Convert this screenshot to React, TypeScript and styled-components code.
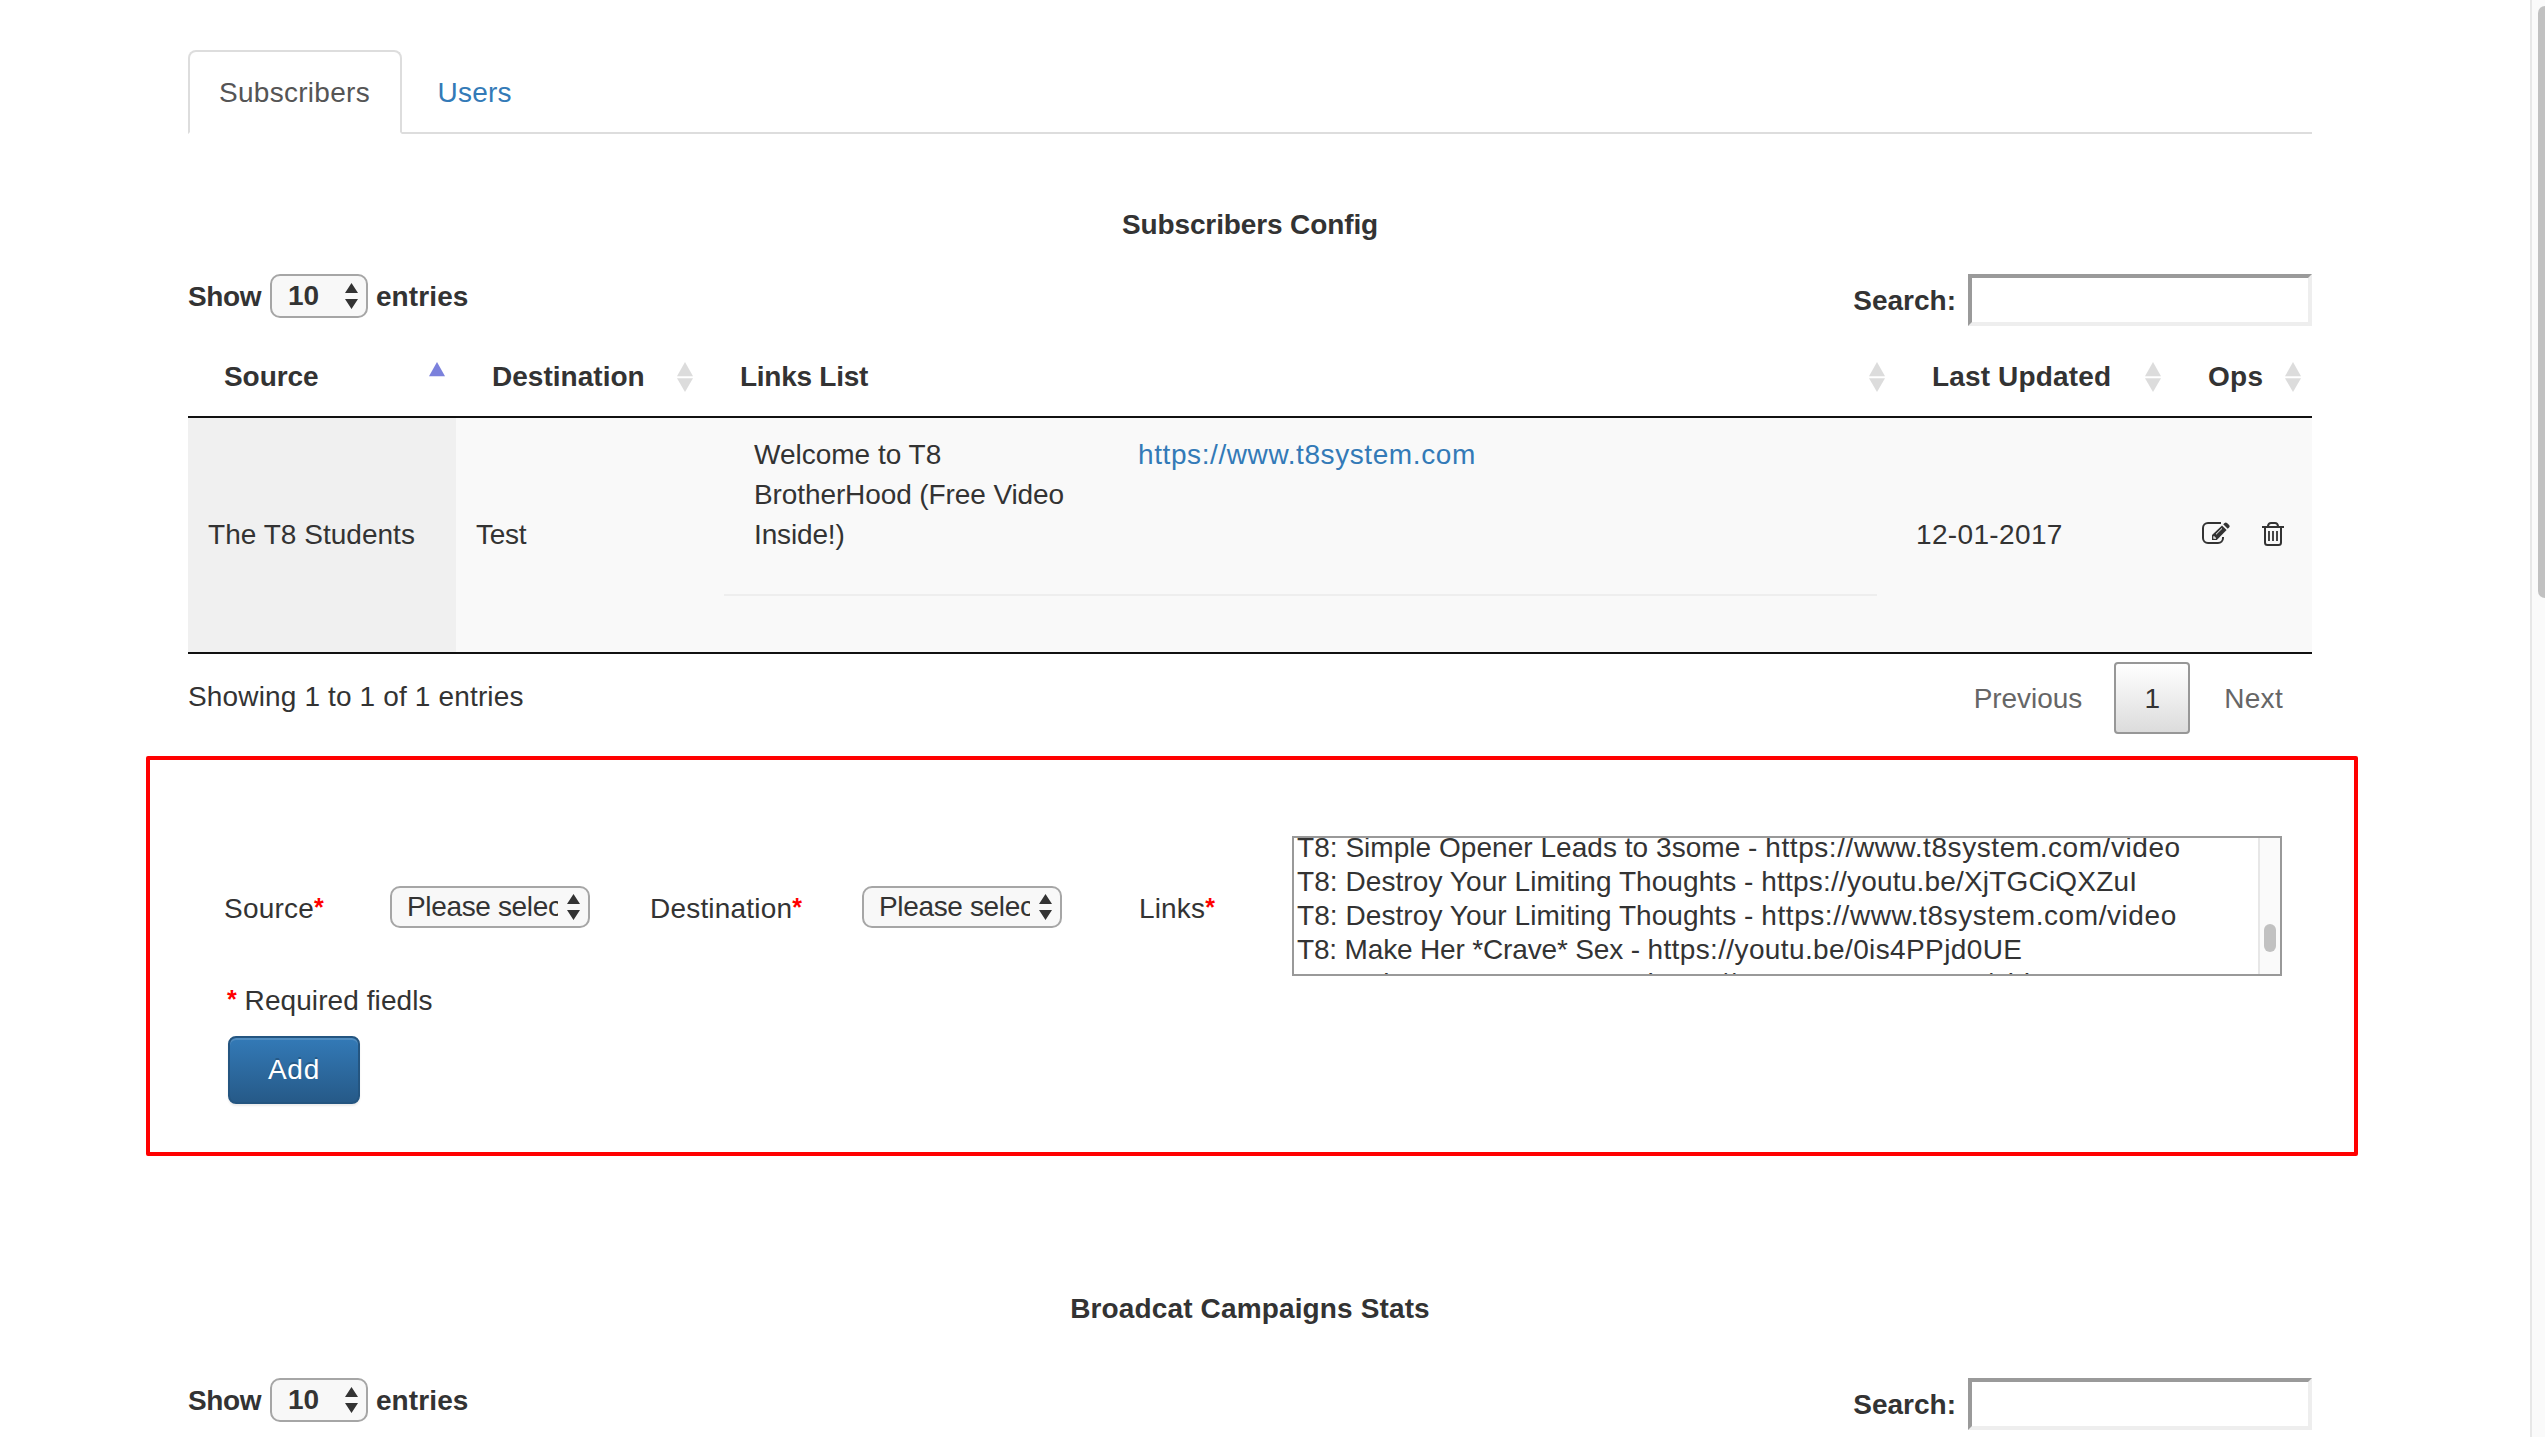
import React from 'react';
import styled, { createGlobalStyle, css } from 'styled-components';

const GlobalStyle = createGlobalStyle`
  *, *::before, *::after { box-sizing: border-box; }
  body {
    margin: 0;
    overflow: hidden;
    background: #fff;
    color: #333;
    font: 28px/40px "Liberation Sans", Arial, sans-serif;
  }
`;

const Page = styled.div`
  display: flex;
  height: 1437px;
  overflow: hidden;
`;

const Main = styled.main`
  flex: 1;
  padding: 50px 0 0 188px;
`;

const Content = styled.div`
  width: 2124px;
`;

/* Text run with tracking */
const T = styled.span<{ $ls?: number }>`
  letter-spacing: ${(p) => p.$ls ?? 0}px;
  white-space: pre;
`;

/* Page scrollbar */
const ScrollTrack = styled.div`
  width: 15px;
  padding: 6px 0 0 6px;
  overflow: hidden;
  background: #fafafa;
  border-left: 2px solid #e7e7e7;
`;

const ScrollThumb = styled.div`
  width: 14px;
  height: 592px;
  border-radius: 7px;
  background: #c1c1c1;
`;

/* Tabs */
const Tabs = styled.nav`
  display: flex;
  gap: 5px;
  height: 84px;
  border-bottom: 2px solid #ddd;
`;

const Tab = styled.a<{ $active?: boolean }>`
  height: 84px;
  padding: 21px 29px 0;
  border: 2px solid transparent;
  border-radius: 8px 8px 0 0;
  color: #337ab7;
  ${(p) =>
    p.$active &&
    css`
      width: 213.5px;
      color: #555;
      background: #fff;
      border-color: #ddd #ddd #fff;
    `}
`;

const Heading = styled.h5<{ $top: number }>`
  margin: ${(p) => p.$top}px 0 0;
  font-size: 28px;
  line-height: 40px;
  font-weight: 700;
  text-align: center;
`;

/* Length menu and search */
const Controls = styled.div<{ $top: number }>`
  display: flex;
  justify-content: space-between;
  align-items: flex-start;
  height: 52px;
  margin-top: ${(p) => p.$top}px;
  font-weight: 700;
`;

const LengthMenu = styled.label`
  display: flex;
  align-items: center;
  & > span {
    padding-top: 2px;
  }
`;

const ShowText = styled(T)`
  width: 82px;
`;

const SearchLabel = styled.label`
  display: flex;
  align-items: center;
  gap: 12px;
  & > span {
    padding-top: 2px;
  }
`;

const SearchBox = styled.input`
  width: 344px;
  height: 52px;
  border: 4px solid;
  border-color: #9a9a9a #eee #eee #9a9a9a;
  background: #fff;
  outline: none;
`;

const SelectBox = styled.div<{ $w: number; $h: number; $pad: number }>`
  display: flex;
  align-items: center;
  flex: none;
  width: ${(p) => p.$w}px;
  height: ${(p) => p.$h}px;
  padding: 0 8px 0 ${(p) => p.$pad}px;
  border: 2px solid #a6a6a6;
  border-radius: 10px;
  background: #f8f8f8;
`;

const SelectText = styled.div`
  flex: 1;
  height: 40px;
  overflow: hidden;
  white-space: nowrap;
`;

const ArrowsSvg = styled.svg`
  flex: none;
  width: 13px;
  height: 26px;
  margin-left: 9px;
  fill: #333;
`;

const SelectArrows = () => (
  <ArrowsSvg viewBox="0 0 13 26">
    <path d="M6.5 0 13 10H0zM0 16h13L6.5 26z" />
  </ArrowsSvg>
);

/* Data table */
const COLUMNS = '268px 248px 1192px 276px 140px';

const HeadRow = styled.div`
  display: grid;
  grid-template-columns: ${COLUMNS};
  height: 82px;
  margin-top: 10px;
  border-bottom: 2px solid #111;
  font-weight: 700;
`;

const HeadCell = styled.div`
  display: flex;
  align-items: center;
  justify-content: space-between;
  padding: 2px 11px 0 36px;
`;

const SortSvg = styled.svg`
  flex: none;
  width: 16px;
  height: 30px;
`;

const SortIcon = ({ asc }: { asc?: boolean }) => (
  <SortSvg viewBox="0 0 16 30">
    <path d="M8 0 16 14.2H0z" fill={asc ? '#7b81dc' : '#dcdcdc'} />
    {!asc && <path d="M0 16.2h16L8 30z" fill="#dcdcdc" />}
  </SortSvg>
);

const BodyRow = styled.div`
  display: grid;
  grid-template-columns: ${COLUMNS};
  height: 236px;
  border-bottom: 2px solid #111;
  background: #f9f9f9;
`;

const Cell = styled.div<{ $sorted?: boolean }>`
  display: flex;
  align-items: center;
  padding: 0 19px 0 20px;
  ${(p) => p.$sorted && 'background: #f0f0f0;'}
`;

const LinksCell = styled.div`
  padding: 17px 19px 0 20px;
`;

const LinkRow = styled.div`
  display: grid;
  grid-template-columns: 384px 1fr;
  height: 161px;
  padding-left: 30px;
  border-bottom: 2px solid #eee;
`;

const Lines = styled.div`
  display: flex;
  flex-direction: column;
`;

const Link = styled.a`
  color: #337ab7;
`;

const Ops = styled.div`
  display: flex;
  align-items: flex-start;
  gap: 32px;
  padding: 104px 0 0 30px;
`;

const EditIcon = () => (
  <svg width="28" height="22" viewBox="0 0 28 22" fill="none">
    <path
      d="M19 1H6a5 5 0 0 0-5 5v10a5 5 0 0 0 5 5h10a5 5 0 0 0 5-5v-1"
      stroke="#333"
      strokeWidth="2"
    />
    <path d="M10 18v-5L20 3.4l4.6 4.5L14.8 18z" fill="#333" />
    <path d="M21.2 2.3 22.6.9q1.2-1 2.4 0l2.1 2q1.2 1.3 0 2.5l-1.4 1.4z" fill="#333" />
    <path d="M14 12.3 20 6.4" stroke="#f9f9f9" strokeWidth="1" />
    <path d="M12 14.2v1.9h2" stroke="#f9f9f9" strokeWidth="1.3" />
  </svg>
);

const TrashIcon = () => (
  <svg width="22" height="24" viewBox="0 0 22 24" fill="none" stroke="#333" strokeWidth="2">
    <path d="M0 5h22M6 5V4q.4-3 3-3h4q2.600 0 3 3v1M3 5v15.500Q3 23 5.500 23h11q2.500 0 2.500-2.500V5" />
    <path d="M7 9v10M11 9v10M15 9v10" strokeWidth="1.8" />
  </svg>
);

/* Table footer */
const TableFooter = styled.div`
  display: flex;
  justify-content: space-between;
  align-items: flex-start;
  height: 80px;
  padding-top: 8px;
`;

const Info = styled.div`
  padding-top: 15px;
`;

const Pager = styled.div`
  display: flex;
  align-items: center;
  padding-right: 29px;
  color: #666;
  & > span {
    padding-top: 1px;
  }
`;

const PageButton = styled.div`
  width: 76px;
  height: 72px;
  margin: 0 34px 0 32px;
  border: 2px solid #979797;
  border-radius: 4px;
  background: linear-gradient(#fff, #dcdcdc);
  color: #333;
  line-height: 69px;
  text-align: center;
`;

/* Add form */
const FormPanel = styled.section`
  width: 2212px;
  height: 400px;
  margin: 22px 0 0 -42px;
  padding: 76px 0 0 74px;
  border: 4px solid #f00;
  border-radius: 2px;
`;

const FormRow = styled.div`
  display: flex;
  height: 140px;
`;

const FieldLabel = styled.label<{ $w: number }>`
  flex: none;
  width: ${(p) => p.$w}px;
  padding-top: 53px;
  white-space: nowrap;
`;

const Field = styled.div<{ $after: number }>`
  padding-top: 50px;
  margin-right: ${(p) => p.$after}px;
`;

const Star = styled.span`
  color: #f00;
  font-size: 25px;
  font-weight: 700;
  line-height: 20px;
  vertical-align: 2px;
`;

const ListBox = styled.div`
  display: flex;
  width: 990px;
  height: 140px;
  overflow: hidden;
  border: 2px solid #999;
  background: #fff;
`;

const Options = styled.div`
  flex: 1;
  margin-top: -7px;
  padding-left: 3px;
  line-height: 34px;
`;

const Option = styled.div`
  height: 34px;
`;

const ListTrack = styled.div`
  width: 22px;
  padding: 86px 0 0 4px;
  border-left: 2px solid #e7e7e7;
  background: #fafafa;
`;

const ListThumb = styled.div`
  width: 12px;
  height: 28px;
  border-radius: 6px;
  background: #c1c1c1;
`;

const Required = styled.div`
  height: 40px;
  margin-top: 5px;
  padding-left: 3px;
`;

const AddButton = styled.button`
  display: block;
  width: 132px;
  height: 68px;
  margin: 15px 0 0 4px;
  padding: 0;
  border: 2px solid #245580;
  border-radius: 8px;
  background: linear-gradient(#337ab7, #265a88);
  box-shadow: inset 0 2px 0 rgba(255, 255, 255, 0.15), 0 2px 2px rgba(0, 0, 0, 0.075);
  color: #fff;
  font: inherit;
  text-shadow: 0 -2px 0 rgba(0, 0, 0, 0.2);
`;

const headers = [
  { text: 'Source', ls: -0.07, asc: true },
  { text: 'Destination', ls: 0.02 },
  { text: 'Links List', ls: -0.26 },
  { text: 'Last Updated', ls: 0.15 },
  { text: 'Ops', ls: 0.26 },
];

const options = [
  { title: 'T8: Simple Opener Leads to 3some', ls: 0.04, url: 'https://www.t8system.com/video', urlLs: 0.57 },
  { title: 'T8: Destroy Your Limiting Thoughts', ls: 0.07, url: 'https://youtu.be/XjTGCiQXZuI', urlLs: 0.2 },
  { title: 'T8: Destroy Your Limiting Thoughts', ls: 0.07, url: 'https://www.t8system.com/video', urlLs: 0.57 },
  { title: 'T8: Make Her *Crave* Sex', ls: -0.16, url: 'https://youtu.be/0is4PPjd0UE', urlLs: 0.38 },
  { title: 'T8: Make Her *Crave* Sex', ls: -0.16, url: 'https://www.t8system.com/video', urlLs: 0.57 },
];

const TableControls = ({ top }: { top: number }) => (
  <Controls $top={top}>
    <LengthMenu>
      <ShowText $ls={-0.4}>Show </ShowText>
      <SelectBox $w={98} $h={44} $pad={16}>
        <SelectText>10</SelectText>
        <SelectArrows />
      </SelectBox>
      <T $ls={0.12}>{' entries'}</T>
    </LengthMenu>
    <SearchLabel>
      <T>Search:</T>
      <SearchBox />
    </SearchLabel>
  </Controls>
);

const PleaseSelect = () => (
  <SelectBox $w={200} $h={42} $pad={15}>
    <SelectText>
      <T $ls={-0.35}>Please select</T>
    </SelectText>
    <SelectArrows />
  </SelectBox>
);

export default function App() {
  return (
    <>
      <GlobalStyle />
      <Page>
        <Main>
          <Content>
            <Tabs>
              <Tab $active>
                <T $ls={0.28}>Subscribers</T>
              </Tab>
              <Tab>
                <T $ls={0.25}>Users</T>
              </Tab>
            </Tabs>

            <Heading $top={71}>
              <T $ls={-0.12}>Subscribers Config</T>
            </Heading>
            <TableControls top={29} />

            <HeadRow>
              {headers.map((h) => (
                <HeadCell key={h.text}>
                  <T $ls={h.ls}>{h.text}</T>
                  <SortIcon asc={h.asc} />
                </HeadCell>
              ))}
            </HeadRow>
            <BodyRow>
              <Cell $sorted>
                <T $ls={0.03}>The T8 Students</T>
              </Cell>
              <Cell>
                <T $ls={-0.3}>Test</T>
              </Cell>
              <LinksCell>
                <LinkRow>
                  <Lines>
                    <T>Welcome to T8</T>
                    <T $ls={-0.1}>BrotherHood (Free Video</T>
                    <T $ls={-0.15}>Inside!)</T>
                  </Lines>
                  <Link>
                    <T $ls={0.59}>https://www.t8system.com</T>
                  </Link>
                </LinkRow>
              </LinksCell>
              <Cell>
                <T $ls={0.35}>12-01-2017</T>
              </Cell>
              <Ops>
                <EditIcon />
                <TrashIcon />
              </Ops>
            </BodyRow>

            <TableFooter>
              <Info>
                <T $ls={0.15}>Showing 1 to 1 of 1 entries</T>
              </Info>
              <Pager>
                <T $ls={-0.05}>Previous</T>
                <PageButton>1</PageButton>
                <T $ls={0.3}>Next</T>
              </Pager>
            </TableFooter>

            <FormPanel>
              <FormRow>
                <FieldLabel $w={166}>
                  <T $ls={0.2}>Source</T>
                  <Star>*</Star>
                </FieldLabel>
                <Field $after={60}>
                  <PleaseSelect />
                </Field>
                <FieldLabel $w={212}>
                  <T $ls={0.2}>Destination</T>
                  <Star>*</Star>
                </FieldLabel>
                <Field $after={77}>
                  <PleaseSelect />
                </Field>
                <FieldLabel $w={153}>
                  <T $ls={0.15}>Links</T>
                  <Star>*</Star>
                </FieldLabel>
                <ListBox>
                  <Options>
                    {options.map((o) => (
                      <Option key={o.title + o.url}>
                        <T $ls={o.ls}>{`${o.title} - `}</T>
                        <T $ls={o.urlLs}>{o.url}</T>
                      </Option>
                    ))}
                  </Options>
                  <ListTrack>
                    <ListThumb />
                  </ListTrack>
                </ListBox>
              </FormRow>
              <Required>
                <Star>*</Star>
                <T $ls={0.08}> Required fiedls</T>
              </Required>
              <AddButton>
                <T $ls={0.8}>Add</T>
              </AddButton>
            </FormPanel>

            <Heading $top={133}>
              <T $ls={0.14}>Broadcat Campaigns Stats</T>
            </Heading>
            <TableControls top={49} />
          </Content>
        </Main>
        <ScrollTrack>
          <ScrollThumb />
        </ScrollTrack>
      </Page>
    </>
  );
}
